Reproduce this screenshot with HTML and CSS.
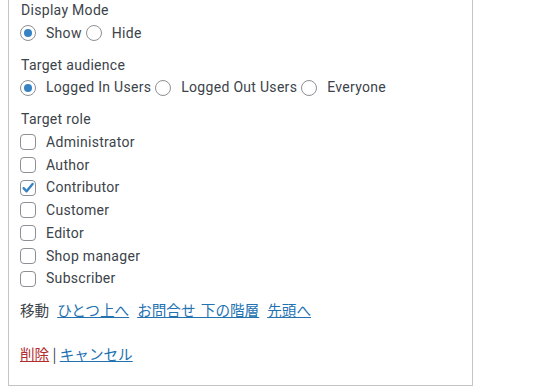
FILE: index.html
```html
<!DOCTYPE html>
<html lang="ja">
<head>
  <meta charset="UTF-8">
  <title>Menu item settings</title>
  <link rel="stylesheet" href="styles.css">
</head>
<body>
  <div class="panel">
    <div class="field">
      <div class="field-title">Display Mode</div>
      <div class="options">
        <label class="opt"><span class="radio checked"></span>Show</label>
        <label class="opt"><span class="radio"></span>Hide</label>
      </div>
    </div>

    <div class="field">
      <div class="field-title">Target audience</div>
      <div class="options">
        <label class="opt"><span class="radio checked"></span>Logged In Users</label>
        <label class="opt"><span class="radio"></span>Logged Out Users</label>
        <label class="opt"><span class="radio"></span>Everyone</label>
      </div>
    </div>

    <div class="field">
      <div class="field-title">Target role</div>
      <div class="roles">
        <label class="opt"><span class="check"></span>Administrator</label>
        <label class="opt"><span class="check"></span>Author</label>
        <label class="opt"><span class="check checked"><svg viewBox="0 0 16 16" width="16" height="16"><path d="M3.6 8.2 L6.6 11.3 L12.6 3.9" fill="none" stroke="#3582c4" stroke-width="2.4" stroke-linecap="round" stroke-linejoin="round"/></svg></span>Contributor</label>
        <label class="opt"><span class="check"></span>Customer</label>
        <label class="opt"><span class="check"></span>Editor</label>
        <label class="opt"><span class="check"></span>Shop manager</label>
        <label class="opt"><span class="check"></span>Subscriber</label>
      </div>
    </div>

    <div class="move">
      <span class="move-label">移動</span>
      <a href="#">ひとつ上へ</a>
      <a href="#">お問合せ 下の階層</a>
      <a href="#">先頭へ</a>
    </div>

    <div class="actions">
      <a href="#" class="delete">削除</a> <span class="sep">|</span> <a href="#">キャンセル</a>
    </div>
  </div>
</body>
</html>
```

FILE: styles.css
```css
body {
  margin: 0;
  background: #fff;
  font-family: "Segoe UI", Roboto, "Noto Sans CJK JP", sans-serif;
  font-size: 14px;
  line-height: 22.75px;
  color: #3c434a;
  letter-spacing: 0.3px;
}
.panel {
  box-sizing: border-box;
  width: 465px;
  margin: -1px 8px 0;
  padding: 0 11px 19px;
  border: 1px solid #c3c4c7;
  border-top: none;
  background: #fff;
}
.field {
  margin-bottom: 9px;
}
.field-title {
  padding-left: 1px;
}
.options {
  display: flex;
  gap: 4px;
}
.roles {
  display: flex;
  flex-direction: column;
}
.opt {
  display: flex;
  align-items: center;
}
.radio,
.check {
  box-sizing: border-box;
  width: 16px;
  height: 16px;
  margin-right: 10px;
  border: 1px solid #8c8f94;
  background: #fff;
  flex: none;
}
.radio {
  border-radius: 50%;
  display: flex;
  align-items: center;
  justify-content: center;
}
.radio.checked::before {
  content: "";
  width: 8px;
  height: 8px;
  border-radius: 50%;
  background: #3582c4;
}
.check {
  border-radius: 4px;
}
.check svg {
  display: block;
  margin: -1px;
}
.move {
  display: flex;
  gap: 8px;
  font-family: "Noto Sans CJK JP", sans-serif;
  font-size: 14.6px;
  letter-spacing: 0;
  margin-bottom: 21px;
}
.move a {
  word-spacing: 2px;
}
.actions {
  font-family: "Noto Sans CJK JP", sans-serif;
  font-size: 14.6px;
  letter-spacing: 0;
}
a {
  color: #2271b1;
}
.delete {
  color: #b32d2e;
}
.sep {
  color: #3c434a;
}
```
